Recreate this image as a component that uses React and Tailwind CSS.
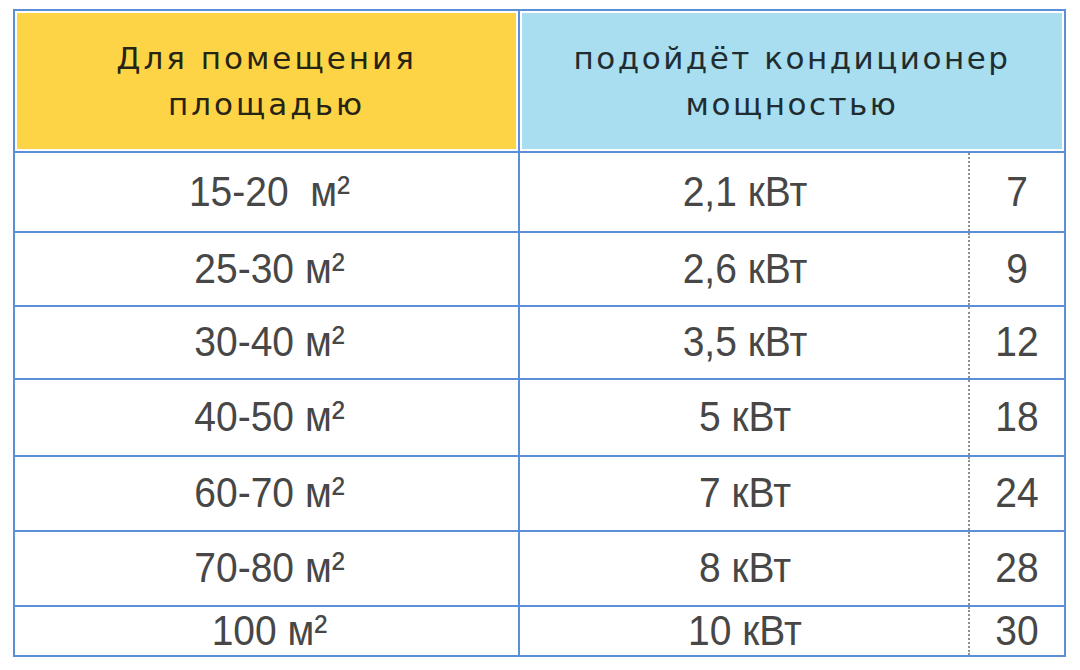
const rows = [
  { area: "15-20", gap: "\u00a0\u00a0", power: "2,1 кВт", num: "7", h: "h-[80px]" },
  { area: "25-30", gap: " ", power: "2,6 кВт", num: "9", h: "h-[74px]" },
  { area: "30-40", gap: " ", power: "3,5 кВт", num: "12", h: "h-[73px]" },
  { area: "40-50", gap: " ", power: "5 кВт", num: "18", h: "h-[77px]" },
  { area: "60-70", gap: " ", power: "7 кВт", num: "24", h: "h-[75px]" },
  { area: "70-80", gap: " ", power: "8 кВт", num: "28", h: "h-[75px]" },
  { area: "100", gap: " ", power: "10 кВт", num: "30", h: "h-[48px]", last: true },
];

export default function App() {
  return (
    <div className="w-[1080px] h-[670px] bg-white pt-[9px] pl-[13px]">
      <div className="w-[1053px] border-2 border-[#5b8fd8] flex flex-col">
        {/* header */}
        <div className="flex h-[142px] border-b-2 border-[#5b8fd8]">
          <div className="w-[505px] border-r-2 border-[#5b8fd8] p-[2px]">
            <div className="h-full bg-[#fdd446] flex flex-col items-center justify-center text-[31px] leading-[46px] tracking-[3px] text-[#262414] font-['DejaVu_Sans',sans-serif]">
              <span>Для помещения</span>
              <span>площадью</span>
            </div>
          </div>
          <div className="flex-1 p-[2px]">
            <div className="h-full bg-[#a9def0] flex flex-col items-center justify-center text-[31px] leading-[46px] tracking-[2.5px] text-[#1f2d31] font-['DejaVu_Sans',sans-serif]">
              <span>подойдёт кондиционер</span>
              <span>мощностью</span>
            </div>
          </div>
        </div>

        {/* body */}
        {rows.map((r) => (
          <div
            key={r.area}
            className={`flex ${r.h} ${r.last ? "" : "border-b-2 border-[#5b8fd8]"} text-[39px] text-[#474747] font-['Liberation_Sans',Arial,sans-serif]`}
          >
            <div className="w-[505px] border-r-2 border-[#5b8fd8] flex items-center justify-center pl-[6px]">
              <span className="scale-y-[1.08]">
                {r.area}
                {r.gap}м²
              </span>
            </div>
            <div className="w-[450px] border-r-2 border-dotted border-[#8f8f8f] flex items-center justify-center pl-[2px]">
              <span className="scale-y-[1.08]">{r.power}</span>
            </div>
            <div className="flex-1 flex items-center justify-center">
              <span className="scale-y-[1.08]">{r.num}</span>
            </div>
          </div>
        ))}
      </div>
    </div>
  );
}
